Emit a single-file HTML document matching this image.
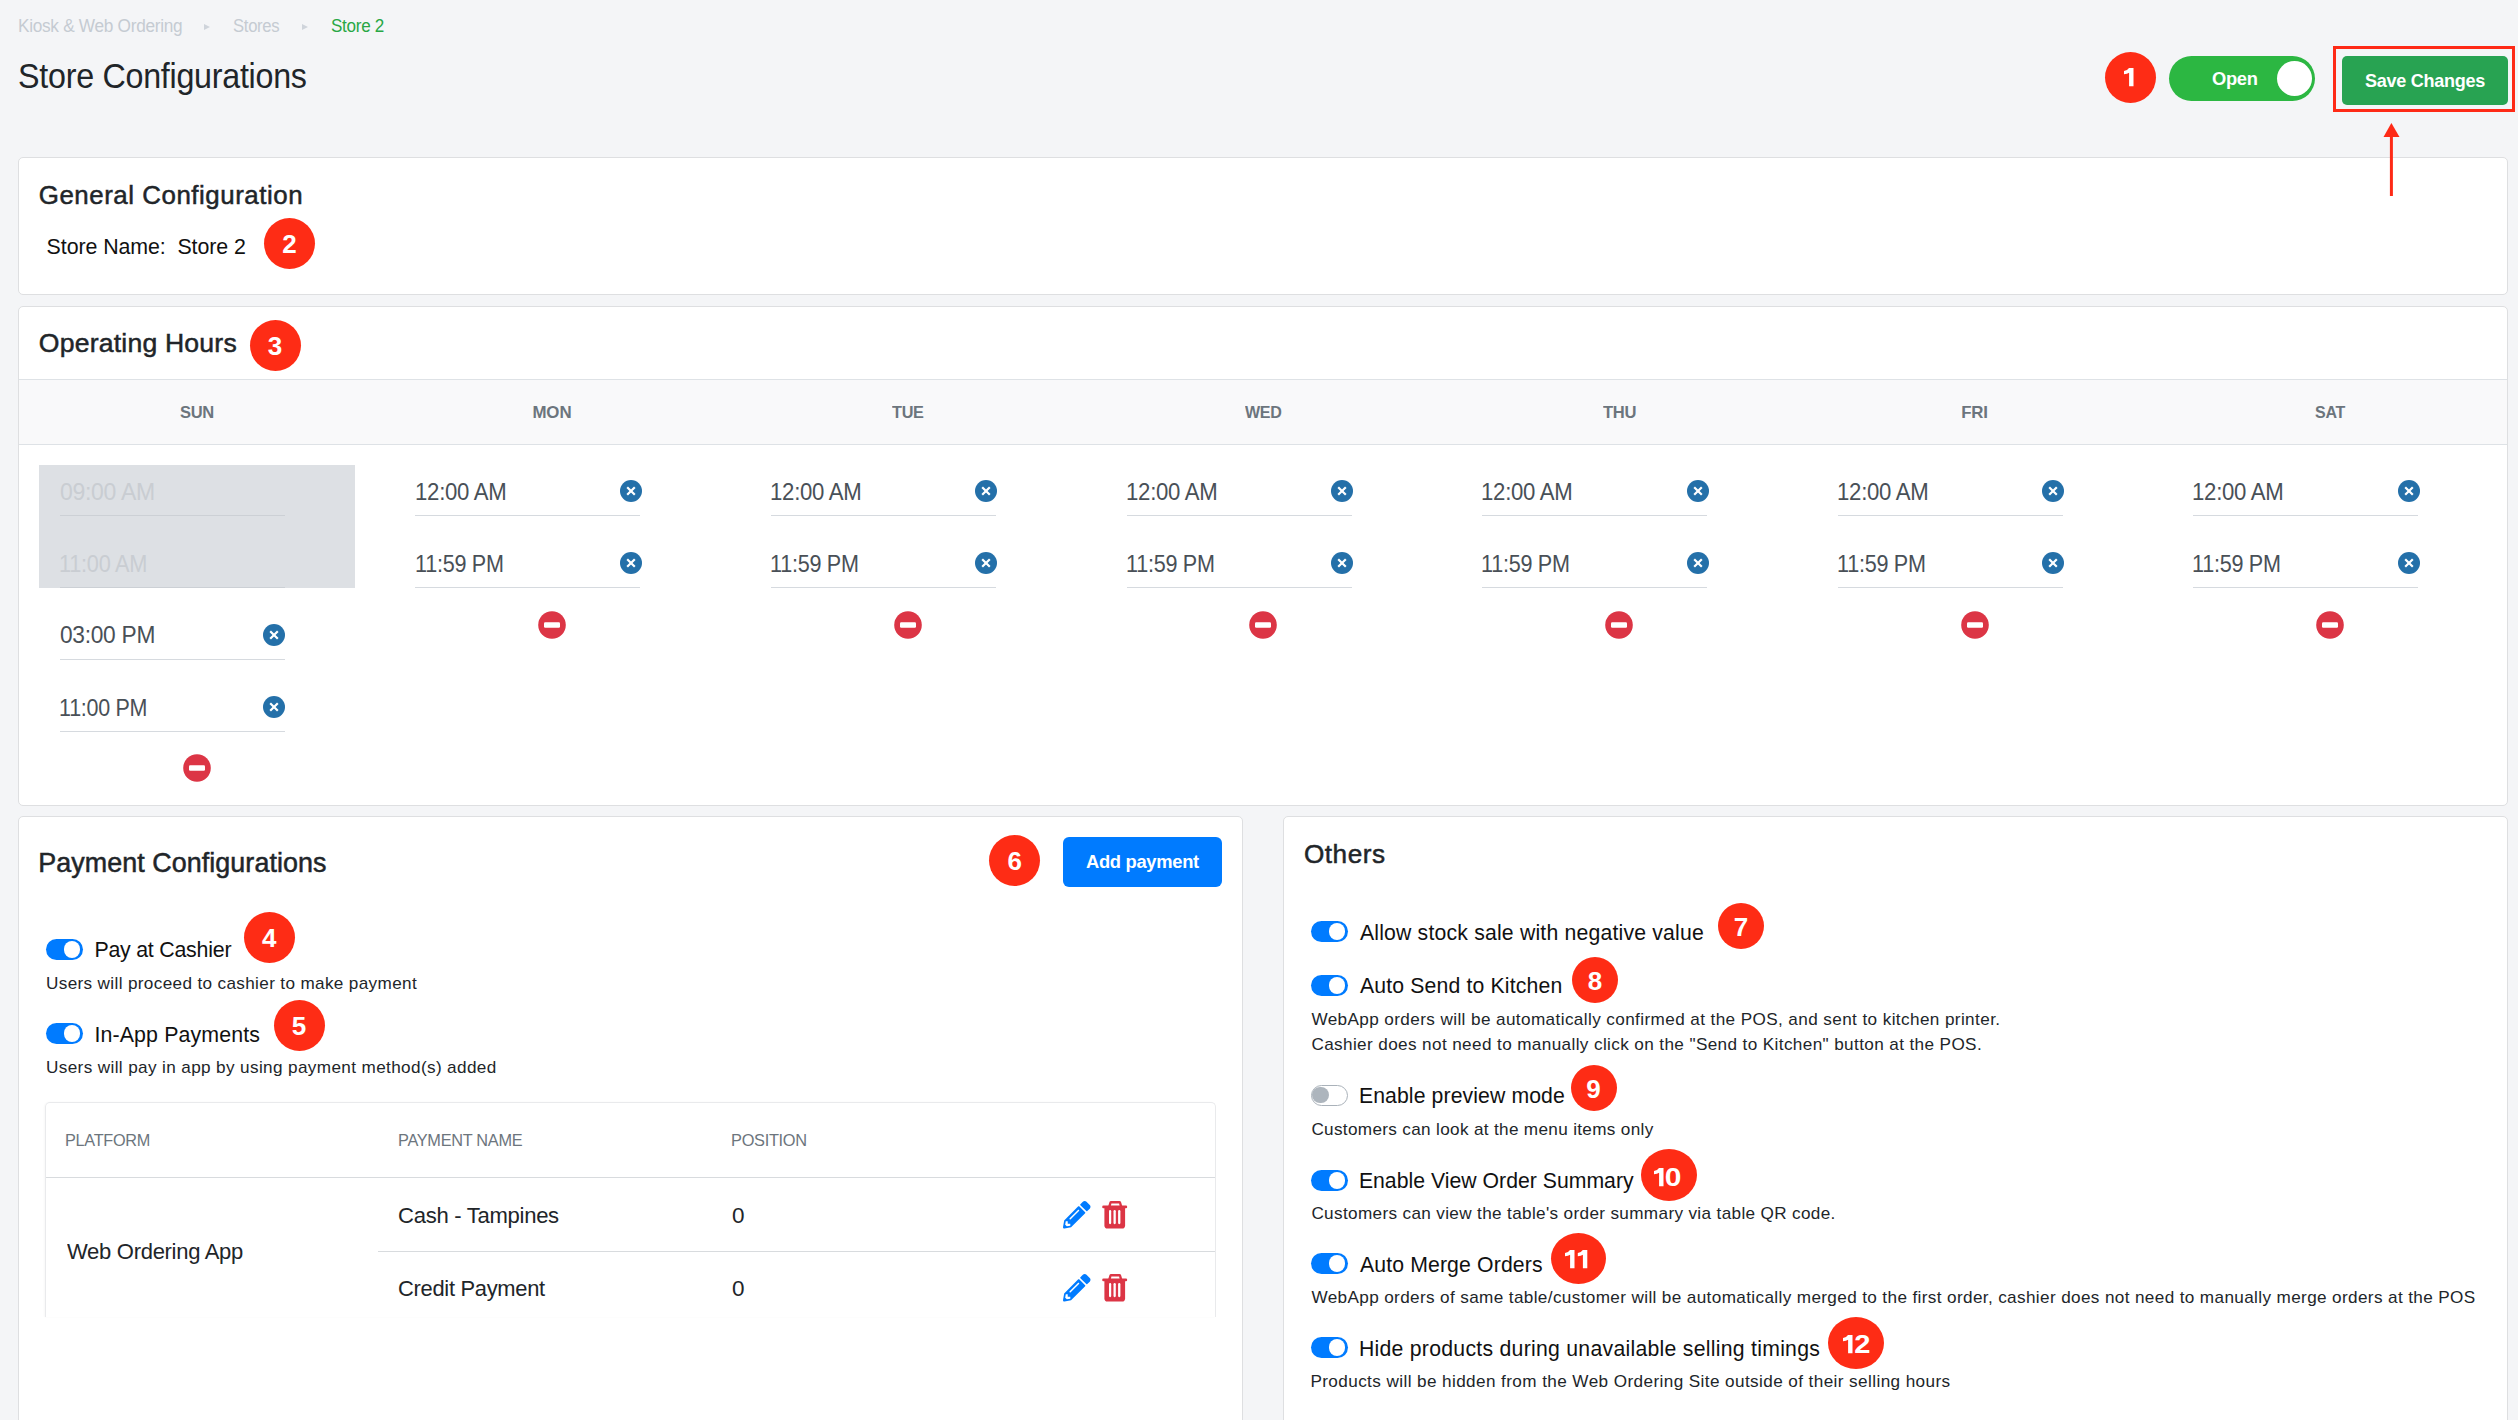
<!DOCTYPE html>
<html><head><meta charset="utf-8"><style>
html,body{margin:0;padding:0}
body{width:2518px;height:1420px;overflow:hidden;position:relative;background:#f4f5f7;font-family:"Liberation Sans",sans-serif}
.t{position:absolute;white-space:pre;line-height:1;}
.bd{position:absolute;background:#fe2c15;border-radius:50%;text-align:center;color:#fff;font-weight:700}
.bd span{display:block;position:relative;top:1px}
</style></head><body>
<div style="position:absolute;left:18px;top:157px;width:2490px;height:138px;background:#fff;border:1.5px solid #dedfe1;border-radius:5px;box-sizing:border-box"></div>
<div style="position:absolute;left:18px;top:306px;width:2490px;height:500px;background:#fff;border:1.5px solid #dedfe1;border-radius:5px;box-sizing:border-box"></div>
<div style="position:absolute;left:18px;top:816px;width:1225px;height:700px;background:#fff;border:1.5px solid #dedfe1;border-radius:5px;box-sizing:border-box"></div>
<div style="position:absolute;left:1283px;top:816px;width:1225px;height:700px;background:#fff;border:1.5px solid #dedfe1;border-radius:5px;box-sizing:border-box"></div>
<div style="position:absolute;left:19px;top:379px;width:2488px;height:66px;background:#f9f9fa;border-top:1.5px solid #dee2e6;border-bottom:1.5px solid #dee2e6;box-sizing:border-box"></div>
<div style="position:absolute;left:39px;top:465px;width:316px;height:123px;background:#dde0e4"></div>
<div style="position:absolute;left:59.9px;top:514.7px;width:225px;height:1.2px;background:#ccd0d5"></div>
<div style="position:absolute;left:59.9px;top:587.2px;width:225px;height:1.2px;background:#ccd0d5"></div>
<div style="position:absolute;left:59.9px;top:659.2px;width:225px;height:1.2px;background:#d6dadf"></div>
<div style="position:absolute;left:59.9px;top:731.2px;width:225px;height:1.2px;background:#d6dadf"></div>
<svg style="position:absolute;left:263.3px;top:623.5px" width="22" height="22" viewBox="0 0 22 22"><circle cx="11" cy="11" r="11" fill="#2470a9"/><path d="M7.2 7.2L14.8 14.8M14.8 7.2L7.2 14.8" stroke="#fff" stroke-width="2.2" stroke-linecap="butt"/></svg>
<svg style="position:absolute;left:263.3px;top:695.7px" width="22" height="22" viewBox="0 0 22 22"><circle cx="11" cy="11" r="11" fill="#2470a9"/><path d="M7.2 7.2L14.8 14.8M14.8 7.2L7.2 14.8" stroke="#fff" stroke-width="2.2" stroke-linecap="butt"/></svg>
<svg style="position:absolute;left:182.7px;top:754.4px" width="28" height="28" viewBox="0 0 28 28"><circle cx="14" cy="14" r="13.8" fill="#dc3545"/><rect x="6" y="11.3" width="16" height="5.4" rx="1.2" fill="#fff"/></svg>
<div style="position:absolute;left:415.47999999999996px;top:514.7px;width:225px;height:1.2px;background:#d6dadf"></div>
<div style="position:absolute;left:415.47999999999996px;top:587.2px;width:225px;height:1.2px;background:#d6dadf"></div>
<svg style="position:absolute;left:619.8px;top:479.5px" width="22" height="22" viewBox="0 0 22 22"><circle cx="11" cy="11" r="11" fill="#2470a9"/><path d="M7.2 7.2L14.8 14.8M14.8 7.2L7.2 14.8" stroke="#fff" stroke-width="2.2" stroke-linecap="butt"/></svg>
<svg style="position:absolute;left:619.8px;top:551.6px" width="22" height="22" viewBox="0 0 22 22"><circle cx="11" cy="11" r="11" fill="#2470a9"/><path d="M7.2 7.2L14.8 14.8M14.8 7.2L7.2 14.8" stroke="#fff" stroke-width="2.2" stroke-linecap="butt"/></svg>
<svg style="position:absolute;left:538.3px;top:610.5px" width="28" height="28" viewBox="0 0 28 28"><circle cx="14" cy="14" r="13.8" fill="#dc3545"/><rect x="6" y="11.3" width="16" height="5.4" rx="1.2" fill="#fff"/></svg>
<div style="position:absolute;left:771.06px;top:514.7px;width:225px;height:1.2px;background:#d6dadf"></div>
<div style="position:absolute;left:771.06px;top:587.2px;width:225px;height:1.2px;background:#d6dadf"></div>
<svg style="position:absolute;left:975.4px;top:479.5px" width="22" height="22" viewBox="0 0 22 22"><circle cx="11" cy="11" r="11" fill="#2470a9"/><path d="M7.2 7.2L14.8 14.8M14.8 7.2L7.2 14.8" stroke="#fff" stroke-width="2.2" stroke-linecap="butt"/></svg>
<svg style="position:absolute;left:975.4px;top:551.6px" width="22" height="22" viewBox="0 0 22 22"><circle cx="11" cy="11" r="11" fill="#2470a9"/><path d="M7.2 7.2L14.8 14.8M14.8 7.2L7.2 14.8" stroke="#fff" stroke-width="2.2" stroke-linecap="butt"/></svg>
<svg style="position:absolute;left:893.9px;top:610.5px" width="28" height="28" viewBox="0 0 28 28"><circle cx="14" cy="14" r="13.8" fill="#dc3545"/><rect x="6" y="11.3" width="16" height="5.4" rx="1.2" fill="#fff"/></svg>
<div style="position:absolute;left:1126.64px;top:514.7px;width:225px;height:1.2px;background:#d6dadf"></div>
<div style="position:absolute;left:1126.64px;top:587.2px;width:225px;height:1.2px;background:#d6dadf"></div>
<svg style="position:absolute;left:1330.9px;top:479.5px" width="22" height="22" viewBox="0 0 22 22"><circle cx="11" cy="11" r="11" fill="#2470a9"/><path d="M7.2 7.2L14.8 14.8M14.8 7.2L7.2 14.8" stroke="#fff" stroke-width="2.2" stroke-linecap="butt"/></svg>
<svg style="position:absolute;left:1330.9px;top:551.6px" width="22" height="22" viewBox="0 0 22 22"><circle cx="11" cy="11" r="11" fill="#2470a9"/><path d="M7.2 7.2L14.8 14.8M14.8 7.2L7.2 14.8" stroke="#fff" stroke-width="2.2" stroke-linecap="butt"/></svg>
<svg style="position:absolute;left:1249.4px;top:610.5px" width="28" height="28" viewBox="0 0 28 28"><circle cx="14" cy="14" r="13.8" fill="#dc3545"/><rect x="6" y="11.3" width="16" height="5.4" rx="1.2" fill="#fff"/></svg>
<div style="position:absolute;left:1482.22px;top:514.7px;width:225px;height:1.2px;background:#d6dadf"></div>
<div style="position:absolute;left:1482.22px;top:587.2px;width:225px;height:1.2px;background:#d6dadf"></div>
<svg style="position:absolute;left:1686.5px;top:479.5px" width="22" height="22" viewBox="0 0 22 22"><circle cx="11" cy="11" r="11" fill="#2470a9"/><path d="M7.2 7.2L14.8 14.8M14.8 7.2L7.2 14.8" stroke="#fff" stroke-width="2.2" stroke-linecap="butt"/></svg>
<svg style="position:absolute;left:1686.5px;top:551.6px" width="22" height="22" viewBox="0 0 22 22"><circle cx="11" cy="11" r="11" fill="#2470a9"/><path d="M7.2 7.2L14.8 14.8M14.8 7.2L7.2 14.8" stroke="#fff" stroke-width="2.2" stroke-linecap="butt"/></svg>
<svg style="position:absolute;left:1605.0px;top:610.5px" width="28" height="28" viewBox="0 0 28 28"><circle cx="14" cy="14" r="13.8" fill="#dc3545"/><rect x="6" y="11.3" width="16" height="5.4" rx="1.2" fill="#fff"/></svg>
<div style="position:absolute;left:1837.8px;top:514.7px;width:225px;height:1.2px;background:#d6dadf"></div>
<div style="position:absolute;left:1837.8px;top:587.2px;width:225px;height:1.2px;background:#d6dadf"></div>
<svg style="position:absolute;left:2042.1px;top:479.5px" width="22" height="22" viewBox="0 0 22 22"><circle cx="11" cy="11" r="11" fill="#2470a9"/><path d="M7.2 7.2L14.8 14.8M14.8 7.2L7.2 14.8" stroke="#fff" stroke-width="2.2" stroke-linecap="butt"/></svg>
<svg style="position:absolute;left:2042.1px;top:551.6px" width="22" height="22" viewBox="0 0 22 22"><circle cx="11" cy="11" r="11" fill="#2470a9"/><path d="M7.2 7.2L14.8 14.8M14.8 7.2L7.2 14.8" stroke="#fff" stroke-width="2.2" stroke-linecap="butt"/></svg>
<svg style="position:absolute;left:1960.6px;top:610.5px" width="28" height="28" viewBox="0 0 28 28"><circle cx="14" cy="14" r="13.8" fill="#dc3545"/><rect x="6" y="11.3" width="16" height="5.4" rx="1.2" fill="#fff"/></svg>
<div style="position:absolute;left:2193.38px;top:514.7px;width:225px;height:1.2px;background:#d6dadf"></div>
<div style="position:absolute;left:2193.38px;top:587.2px;width:225px;height:1.2px;background:#d6dadf"></div>
<svg style="position:absolute;left:2397.7px;top:479.5px" width="22" height="22" viewBox="0 0 22 22"><circle cx="11" cy="11" r="11" fill="#2470a9"/><path d="M7.2 7.2L14.8 14.8M14.8 7.2L7.2 14.8" stroke="#fff" stroke-width="2.2" stroke-linecap="butt"/></svg>
<svg style="position:absolute;left:2397.7px;top:551.6px" width="22" height="22" viewBox="0 0 22 22"><circle cx="11" cy="11" r="11" fill="#2470a9"/><path d="M7.2 7.2L14.8 14.8M14.8 7.2L7.2 14.8" stroke="#fff" stroke-width="2.2" stroke-linecap="butt"/></svg>
<svg style="position:absolute;left:2316.2px;top:610.5px" width="28" height="28" viewBox="0 0 28 28"><circle cx="14" cy="14" r="13.8" fill="#dc3545"/><rect x="6" y="11.3" width="16" height="5.4" rx="1.2" fill="#fff"/></svg>
<svg style="position:absolute;left:204.1px;top:23.5px" width="7" height="6" viewBox="0 0 7 6"><path d="M0 0L6 3L0 6Z" fill="#cfd4db"/></svg>
<svg style="position:absolute;left:302.1px;top:23.5px" width="7" height="6" viewBox="0 0 7 6"><path d="M0 0L6 3L0 6Z" fill="#cfd4db"/></svg>
<div style="position:absolute;left:2169px;top:56px;width:146px;height:45px;background:#2cb742;border-radius:23px"></div>
<div style="position:absolute;left:2276.5px;top:60.8px;width:35.4px;height:35.4px;background:#fff;border-radius:50%"></div>
<div style="position:absolute;left:2342px;top:56px;width:166px;height:49px;background:#28a352;border-radius:5px"></div>
<div style="position:absolute;left:2332.5px;top:46px;width:182.5px;height:66px;border:3px solid #fe2a16;box-sizing:border-box"></div>
<svg style="position:absolute;left:2380px;top:120px" width="24" height="80" viewBox="0 0 24 80"><path d="M11.4 16V76" stroke="#fe2a16" stroke-width="3"/><path d="M3.5 17L11.4 3L19.5 17Z" fill="#fe2a16"/></svg>
<div style="position:absolute;left:1063px;top:837px;width:159px;height:50px;background:#007bff;border-radius:6px"></div>
<div style="position:absolute;left:46px;top:939px;width:37px;height:21px;border-radius:11px;background:#007bff"><div style="position:absolute;left:18px;top:2.3px;width:16.4px;height:16.4px;border-radius:50%;background:#fff"></div></div>
<div style="position:absolute;left:46px;top:1023px;width:37px;height:21px;border-radius:11px;background:#007bff"><div style="position:absolute;left:18px;top:2.3px;width:16.4px;height:16.4px;border-radius:50%;background:#fff"></div></div>
<div style="position:absolute;left:1311px;top:921px;width:37px;height:21px;border-radius:11px;background:#007bff"><div style="position:absolute;left:18px;top:2.3px;width:16.4px;height:16.4px;border-radius:50%;background:#fff"></div></div>
<div style="position:absolute;left:1311px;top:975px;width:37px;height:21px;border-radius:11px;background:#007bff"><div style="position:absolute;left:18px;top:2.3px;width:16.4px;height:16.4px;border-radius:50%;background:#fff"></div></div>
<div style="position:absolute;left:1311px;top:1085px;width:37px;height:20.5px;border-radius:11px;background:#fff;border:1.2px solid #aab2ba;box-sizing:border-box"></div>
<div style="position:absolute;left:1312.4px;top:1086.8px;width:16.5px;height:16.5px;border-radius:50%;background:#adb5bd"></div>
<div style="position:absolute;left:1311px;top:1170px;width:37px;height:21px;border-radius:11px;background:#007bff"><div style="position:absolute;left:18px;top:2.3px;width:16.4px;height:16.4px;border-radius:50%;background:#fff"></div></div>
<div style="position:absolute;left:1311px;top:1253px;width:37px;height:21px;border-radius:11px;background:#007bff"><div style="position:absolute;left:18px;top:2.3px;width:16.4px;height:16.4px;border-radius:50%;background:#fff"></div></div>
<div style="position:absolute;left:1311px;top:1337px;width:37px;height:21px;border-radius:11px;background:#007bff"><div style="position:absolute;left:18px;top:2.3px;width:16.4px;height:16.4px;border-radius:50%;background:#fff"></div></div>
<div style="position:absolute;left:45px;top:1102px;width:1171px;height:215px;overflow:hidden;border:1.5px solid #e9eaec;box-shadow:-1px 0 2px rgba(0,0,0,0.03);border-bottom:none;border-radius:5px 5px 0 0;box-sizing:border-box"></div>
<div style="position:absolute;left:46px;top:1177px;width:1169px;height:1.3px;background:#d8dbde"></div>
<div style="position:absolute;left:378px;top:1251px;width:837px;height:1.3px;background:#d8dbde"></div>
<svg style="position:absolute;left:1063px;top:1201px" width="27.5" height="27.5" viewBox="0 0 512 512" fill="#007bff"><path d="M497.9 142.1l-46.1 46.1c-4.7 4.7-12.3 4.7-17 0l-111-111c-4.7-4.7-4.7-12.3 0-17l46.1-46.1c18.7-18.7 49.1-18.7 67.9 0l60.1 60.1c18.8 18.7 18.8 49.1 0 67.9zM284.2 99.8L21.6 362.4.4 483.9c-2.9 16.4 11.4 30.6 27.8 27.8l121.5-21.3 262.6-262.6c4.7-4.7 4.7-12.3 0-17l-111-111c-4.8-4.7-12.4-4.7-17.1 0zM124.1 339.9c-5.5-5.5-5.5-14.3 0-19.8l154-154c5.5-5.5 14.3-5.5 19.8 0s5.5 14.3 0 19.8l-154 154c-5.5 5.5-14.3 5.5-19.8 0zM88 424h48v36.3l-64.5 11.3-31.1-31.1L51.7 376H88v48z"/></svg>
<svg style="position:absolute;left:1101.6px;top:1200.7px" width="26" height="28" viewBox="0 0 26 28"><g fill="#dc3545"><rect x="0.2" y="4.6" width="25" height="2.6" rx="1.3"/><path d="M6.2 5.2L7.3 1.4Q7.7 0 9.1 0H17.4Q18.8 0 19.2 1.4L20.3 5.2H17.7L17.1 2.5H9.4L8.8 5.2Z"/><path d="M2.4 6.5H23.1V24.4Q23.1 27.5 20 27.5H5.5Q2.4 27.5 2.4 24.4Z"/></g><g fill="#fff"><rect x="7.0" y="9.1" width="2.2" height="14.1" rx="1.1"/><rect x="11.5" y="9.1" width="2.3" height="14.1" rx="1.1"/><rect x="16.1" y="9.1" width="2.3" height="14.1" rx="1.1"/></g></svg>
<svg style="position:absolute;left:1063px;top:1274px" width="27.5" height="27.5" viewBox="0 0 512 512" fill="#007bff"><path d="M497.9 142.1l-46.1 46.1c-4.7 4.7-12.3 4.7-17 0l-111-111c-4.7-4.7-4.7-12.3 0-17l46.1-46.1c18.7-18.7 49.1-18.7 67.9 0l60.1 60.1c18.8 18.7 18.8 49.1 0 67.9zM284.2 99.8L21.6 362.4.4 483.9c-2.9 16.4 11.4 30.6 27.8 27.8l121.5-21.3 262.6-262.6c4.7-4.7 4.7-12.3 0-17l-111-111c-4.8-4.7-12.4-4.7-17.1 0zM124.1 339.9c-5.5-5.5-5.5-14.3 0-19.8l154-154c5.5-5.5 14.3-5.5 19.8 0s5.5 14.3 0 19.8l-154 154c-5.5 5.5-14.3 5.5-19.8 0zM88 424h48v36.3l-64.5 11.3-31.1-31.1L51.7 376H88v48z"/></svg>
<svg style="position:absolute;left:1101.6px;top:1273.7px" width="26" height="28" viewBox="0 0 26 28"><g fill="#dc3545"><rect x="0.2" y="4.6" width="25" height="2.6" rx="1.3"/><path d="M6.2 5.2L7.3 1.4Q7.7 0 9.1 0H17.4Q18.8 0 19.2 1.4L20.3 5.2H17.7L17.1 2.5H9.4L8.8 5.2Z"/><path d="M2.4 6.5H23.1V24.4Q23.1 27.5 20 27.5H5.5Q2.4 27.5 2.4 24.4Z"/></g><g fill="#fff"><rect x="7.0" y="9.1" width="2.2" height="14.1" rx="1.1"/><rect x="11.5" y="9.1" width="2.3" height="14.1" rx="1.1"/><rect x="16.1" y="9.1" width="2.3" height="14.1" rx="1.1"/></g></svg>
<div class="bd" style="left:2105.0px;top:51.9px;width:51px;height:51px;"></div>
<svg style="position:absolute;left:2123.5px;top:68.3px" width="10" height="19" viewBox="0 0 10 19"><path d="M5.0 0H9.5V18.2H5.1V4.7Q3.3 5.9 0 6.3V3.1Q3.5 2.4 5.0 0Z" fill="#fff"/></svg>
<div class="bd" style="left:263.9px;top:217.8px;width:51px;height:51px;"><span style="font-size:26px;line-height:51px">2</span></div>
<div class="bd" style="left:249.5px;top:319.7px;width:51px;height:51px;"><span style="font-size:26px;line-height:51px">3</span></div>
<div class="bd" style="left:243.7px;top:911.7px;width:51px;height:51px;"><span style="font-size:26px;line-height:51px">4</span></div>
<div class="bd" style="left:273.5px;top:999.5px;width:51px;height:51px;"><span style="font-size:26px;line-height:51px">5</span></div>
<div class="bd" style="left:989.2px;top:835.1px;width:51px;height:51px;"><span style="font-size:26px;line-height:51px">6</span></div>
<div class="bd" style="left:1718.0px;top:903.0px;width:46px;height:46px;"><span style="font-size:26px;line-height:46px">7</span></div>
<div class="bd" style="left:1572.0px;top:957.0px;width:46px;height:46px;"><span style="font-size:26px;line-height:46px">8</span></div>
<div class="bd" style="left:1570.6px;top:1065.0px;width:46px;height:46px;"><span style="font-size:26px;line-height:46px">9</span></div>
<div class="bd" style="left:1640.9px;top:1148.8px;width:56px;height:52px;"></div>
<svg style="position:absolute;left:1654px;top:1167.6px" width="10" height="19" viewBox="0 0 10 19"><path d="M5.0 0H9.5V18.2H5.1V4.7Q3.3 5.9 0 6.3V3.1Q3.5 2.4 5.0 0Z" fill="#fff"/></svg>
<div style="position:absolute;left:1666.1px;top:1164px;font-size:26px;line-height:1;font-weight:700;color:#fff;transform:scaleX(1.15);transform-origin:8.5px 0">0</div>
<div class="bd" style="left:1550.5px;top:1232.5px;width:55px;height:51px;"></div>
<svg style="position:absolute;left:1565.2px;top:1249.7px" width="23" height="19" viewBox="0 0 23 19"><path d="M5.0 0H9.5V18.2H5.1V4.7Q3.3 5.9 0 6.3V3.1Q3.5 2.4 5.0 0Z" fill="#fff"/><path d="M5.0 0H9.5V18.2H5.1V4.7Q3.3 5.9 0 6.3V3.1Q3.5 2.4 5.0 0Z" transform="translate(12.8 0)" fill="#fff"/></svg>
<div class="bd" style="left:1828.4px;top:1316.7px;width:56px;height:52px;"></div>
<svg style="position:absolute;left:1842.7px;top:1335.2px" width="10" height="19" viewBox="0 0 10 19"><path d="M5.0 0H9.5V18.2H5.1V4.7Q3.3 5.9 0 6.3V3.1Q3.5 2.4 5.0 0Z" fill="#fff"/></svg>
<div style="position:absolute;left:1854.9px;top:1331px;font-size:26px;line-height:1;font-weight:700;color:#fff;transform:scaleX(1.12);transform-origin:7px 0">2</div>
<div class="t" style="left:17.7px;top:18.0px;font-size:17.44px;letter-spacing:-0.300px;transform:scaleX(0.9885);transform-origin:1.0px 0;font-weight:400;color:#c5cbd2;">Kiosk &amp; Web Ordering</div>
<div class="t" style="left:232.7px;top:18.0px;font-size:17.44px;letter-spacing:-0.300px;transform:scaleX(0.9537);transform-origin:0.0px 0;font-weight:400;color:#c5cbd2;">Stores</div>
<div class="t" style="left:331.0px;top:18.0px;font-size:17.44px;letter-spacing:-0.300px;transform:scaleX(0.9791);transform-origin:0.0px 0;font-weight:400;color:#28a745;">Store 2</div>
<div class="t" style="left:17.7px;top:59.0px;font-size:35.90px;letter-spacing:-0.300px;transform:scaleX(0.8985);transform-origin:1.0px 0;font-weight:400;color:#212529;">Store Configurations</div>
<div class="t" style="left:2211.7px;top:70.0px;font-size:18.46px;letter-spacing:-0.300px;transform:scaleX(0.9944);transform-origin:0.0px 0;font-weight:700;color:#fff;">Open</div>
<div class="t" style="left:2365.0px;top:72.0px;font-size:18.31px;letter-spacing:-0.300px;transform:scaleX(0.9868);transform-origin:0.0px 0;font-weight:700;color:#fff;">Save Changes</div>
<div class="t" style="left:38.8px;top:183.0px;font-size:25.87px;letter-spacing:0.539px;font-weight:400;color:#212529;-webkit-text-stroke:0.5px #212529;">General Configuration</div>
<div class="t" style="left:46.6px;top:237.0px;font-size:21.37px;letter-spacing:-0.071px;font-weight:400;color:#111;">Store Name:  Store 2</div>
<div class="t" style="left:38.8px;top:330.0px;font-size:26.60px;letter-spacing:0.199px;font-weight:400;color:#212529;-webkit-text-stroke:0.5px #212529;">Operating Hours</div>
<div class="t" style="left:179.7px;top:405.0px;font-size:16.86px;letter-spacing:-0.300px;transform:scaleX(0.9793);transform-origin:0.0px 0;font-weight:700;color:#6c757d;">SUN</div>
<div class="t" style="left:532.4px;top:405.0px;font-size:16.86px;letter-spacing:-0.079px;font-weight:700;color:#6c757d;">MON</div>
<div class="t" style="left:892.1px;top:405.0px;font-size:16.86px;letter-spacing:-0.300px;transform:scaleX(0.9643);transform-origin:0.0px 0;font-weight:700;color:#6c757d;">TUE</div>
<div class="t" style="left:1245.2px;top:405.0px;font-size:16.86px;letter-spacing:-0.300px;transform:scaleX(0.9518);transform-origin:0.0px 0;font-weight:700;color:#6c757d;">WED</div>
<div class="t" style="left:1602.5px;top:405.0px;font-size:16.86px;letter-spacing:-0.300px;transform:scaleX(0.9831);transform-origin:0.0px 0;font-weight:700;color:#6c757d;">THU</div>
<div class="t" style="left:1961.2px;top:405.0px;font-size:16.86px;letter-spacing:-0.237px;font-weight:700;color:#6c757d;">FRI</div>
<div class="t" style="left:2314.8px;top:405.0px;font-size:16.86px;letter-spacing:-0.300px;transform:scaleX(0.9488);transform-origin:0.0px 0;font-weight:700;color:#6c757d;">SAT</div>
<div class="t" style="left:59.9px;top:481.0px;font-size:23.26px;letter-spacing:-0.300px;transform:scaleX(0.9901);transform-origin:0.0px 0;font-weight:400;color:#c9cdd2;">09:00 AM</div>
<div class="t" style="left:58.9px;top:553.0px;font-size:23.26px;letter-spacing:-0.300px;transform:scaleX(0.9355);transform-origin:1.0px 0;font-weight:400;color:#c9cdd2;">11:00 AM</div>
<div class="t" style="left:59.9px;top:624.0px;font-size:23.26px;letter-spacing:-0.300px;transform:scaleX(0.9787);transform-origin:0.0px 0;font-weight:400;color:#495057;">03:00 PM</div>
<div class="t" style="left:58.9px;top:697.0px;font-size:23.26px;letter-spacing:-0.300px;transform:scaleX(0.9237);transform-origin:1.0px 0;font-weight:400;color:#495057;">11:00 PM</div>
<div class="t" style="left:414.5px;top:481.0px;font-size:23.26px;letter-spacing:-0.300px;transform:scaleX(0.9542);transform-origin:1.0px 0;font-weight:400;color:#495057;">12:00 AM</div>
<div class="t" style="left:414.5px;top:553.0px;font-size:23.26px;letter-spacing:-0.300px;transform:scaleX(0.9290);transform-origin:1.0px 0;font-weight:400;color:#495057;">11:59 PM</div>
<div class="t" style="left:770.1px;top:481.0px;font-size:23.26px;letter-spacing:-0.300px;transform:scaleX(0.9542);transform-origin:1.0px 0;font-weight:400;color:#495057;">12:00 AM</div>
<div class="t" style="left:770.1px;top:553.0px;font-size:23.26px;letter-spacing:-0.300px;transform:scaleX(0.9290);transform-origin:1.0px 0;font-weight:400;color:#495057;">11:59 PM</div>
<div class="t" style="left:1125.6px;top:481.0px;font-size:23.26px;letter-spacing:-0.300px;transform:scaleX(0.9542);transform-origin:1.0px 0;font-weight:400;color:#495057;">12:00 AM</div>
<div class="t" style="left:1125.6px;top:553.0px;font-size:23.26px;letter-spacing:-0.300px;transform:scaleX(0.9290);transform-origin:1.0px 0;font-weight:400;color:#495057;">11:59 PM</div>
<div class="t" style="left:1481.2px;top:481.0px;font-size:23.26px;letter-spacing:-0.300px;transform:scaleX(0.9542);transform-origin:1.0px 0;font-weight:400;color:#495057;">12:00 AM</div>
<div class="t" style="left:1481.2px;top:553.0px;font-size:23.26px;letter-spacing:-0.300px;transform:scaleX(0.9290);transform-origin:1.0px 0;font-weight:400;color:#495057;">11:59 PM</div>
<div class="t" style="left:1836.8px;top:481.0px;font-size:23.26px;letter-spacing:-0.300px;transform:scaleX(0.9542);transform-origin:1.0px 0;font-weight:400;color:#495057;">12:00 AM</div>
<div class="t" style="left:1836.8px;top:553.0px;font-size:23.26px;letter-spacing:-0.300px;transform:scaleX(0.9290);transform-origin:1.0px 0;font-weight:400;color:#495057;">11:59 PM</div>
<div class="t" style="left:2192.4px;top:481.0px;font-size:23.26px;letter-spacing:-0.300px;transform:scaleX(0.9542);transform-origin:1.0px 0;font-weight:400;color:#495057;">12:00 AM</div>
<div class="t" style="left:2192.4px;top:553.0px;font-size:23.26px;letter-spacing:-0.300px;transform:scaleX(0.9290);transform-origin:1.0px 0;font-weight:400;color:#495057;">11:59 PM</div>
<div class="t" style="left:38.2px;top:850.0px;font-size:26.89px;letter-spacing:0.068px;font-weight:400;color:#212529;-webkit-text-stroke:0.5px #212529;">Payment Configurations</div>
<div class="t" style="left:1086.0px;top:853.0px;font-size:18.60px;letter-spacing:-0.300px;transform:scaleX(0.9862);transform-origin:0.0px 0;font-weight:700;color:#fff;">Add payment</div>
<div class="t" style="left:94.4px;top:940.0px;font-size:21.37px;letter-spacing:-0.229px;font-weight:400;color:#111;">Pay at Cashier</div>
<div class="t" style="left:46.0px;top:975.0px;font-size:17.15px;letter-spacing:0.348px;font-weight:400;color:#212529;">Users will proceed to cashier to make payment</div>
<div class="t" style="left:94.4px;top:1025.0px;font-size:21.37px;letter-spacing:0.125px;font-weight:400;color:#111;">In-App Payments</div>
<div class="t" style="left:46.0px;top:1059.0px;font-size:17.15px;letter-spacing:0.370px;font-weight:400;color:#212529;">Users will pay in app by using payment method(s) added</div>
<div class="t" style="left:65.4px;top:1133.0px;font-size:16.57px;letter-spacing:-0.300px;transform:scaleX(0.9814);transform-origin:1.0px 0;font-weight:400;color:#6c757d;">PLATFORM</div>
<div class="t" style="left:398.3px;top:1133.0px;font-size:16.57px;letter-spacing:-0.300px;transform:scaleX(0.9849);transform-origin:1.0px 0;font-weight:400;color:#6c757d;">PAYMENT NAME</div>
<div class="t" style="left:730.7px;top:1133.0px;font-size:16.57px;letter-spacing:-0.300px;transform:scaleX(0.9878);transform-origin:1.0px 0;font-weight:400;color:#6c757d;">POSITION</div>
<div class="t" style="left:398.3px;top:1205.0px;font-size:22.53px;letter-spacing:-0.300px;transform:scaleX(0.9806);transform-origin:1.0px 0;font-weight:400;color:#212529;">Cash - Tampines</div>
<div class="t" style="left:732.0px;top:1205.0px;font-size:22.53px;letter-spacing:0.000px;font-weight:400;color:#212529;">0</div>
<div class="t" style="left:66.9px;top:1241.0px;font-size:22.38px;letter-spacing:-0.300px;transform:scaleX(0.9841);transform-origin:0.0px 0;font-weight:400;color:#212529;">Web Ordering App</div>
<div class="t" style="left:398.3px;top:1278.0px;font-size:22.53px;letter-spacing:-0.300px;transform:scaleX(0.9728);transform-origin:1.0px 0;font-weight:400;color:#212529;">Credit Payment</div>
<div class="t" style="left:732.0px;top:1278.0px;font-size:22.53px;letter-spacing:0.000px;font-weight:400;color:#212529;">0</div>
<div class="t" style="left:1303.9px;top:841.0px;font-size:26.16px;letter-spacing:0.537px;font-weight:400;color:#212529;-webkit-text-stroke:0.5px #212529;">Others</div>
<div class="t" style="left:1359.9px;top:922.0px;font-size:21.22px;letter-spacing:0.188px;font-weight:400;color:#111;">Allow stock sale with negative value</div>
<div class="t" style="left:1359.9px;top:975.0px;font-size:21.22px;letter-spacing:0.155px;font-weight:400;color:#111;">Auto Send to Kitchen</div>
<div class="t" style="left:1311.4px;top:1011.0px;font-size:17.15px;letter-spacing:0.394px;font-weight:400;color:#212529;">WebApp orders will be automatically confirmed at the POS, and sent to kitchen printer.</div>
<div class="t" style="left:1311.4px;top:1036.0px;font-size:17.15px;letter-spacing:0.380px;font-weight:400;color:#212529;">Cashier does not need to manually click on the &quot;Send to Kitchen&quot; button at the POS.</div>
<div class="t" style="left:1358.9px;top:1085.0px;font-size:21.22px;letter-spacing:0.103px;font-weight:400;color:#111;">Enable preview mode</div>
<div class="t" style="left:1311.4px;top:1121.0px;font-size:17.15px;letter-spacing:0.330px;font-weight:400;color:#212529;">Customers can look at the menu items only</div>
<div class="t" style="left:1358.9px;top:1170.0px;font-size:21.22px;letter-spacing:0.014px;font-weight:400;color:#111;">Enable View Order Summary</div>
<div class="t" style="left:1311.4px;top:1205.0px;font-size:17.15px;letter-spacing:0.347px;font-weight:400;color:#212529;">Customers can view the table's order summary via table QR code.</div>
<div class="t" style="left:1359.9px;top:1254.0px;font-size:21.22px;letter-spacing:0.142px;font-weight:400;color:#111;">Auto Merge Orders</div>
<div class="t" style="left:1311.4px;top:1289.0px;font-size:17.15px;letter-spacing:0.368px;font-weight:400;color:#212529;">WebApp orders of same table/customer will be automatically merged to the first order, cashier does not need to manually merge orders at the POS</div>
<div class="t" style="left:1358.9px;top:1338.0px;font-size:21.22px;letter-spacing:0.272px;font-weight:400;color:#111;">Hide products during unavailable selling timings</div>
<div class="t" style="left:1310.4px;top:1373.0px;font-size:17.15px;letter-spacing:0.403px;font-weight:400;color:#212529;">Products will be hidden from the Web Ordering Site outside of their selling hours</div>
</body></html>
